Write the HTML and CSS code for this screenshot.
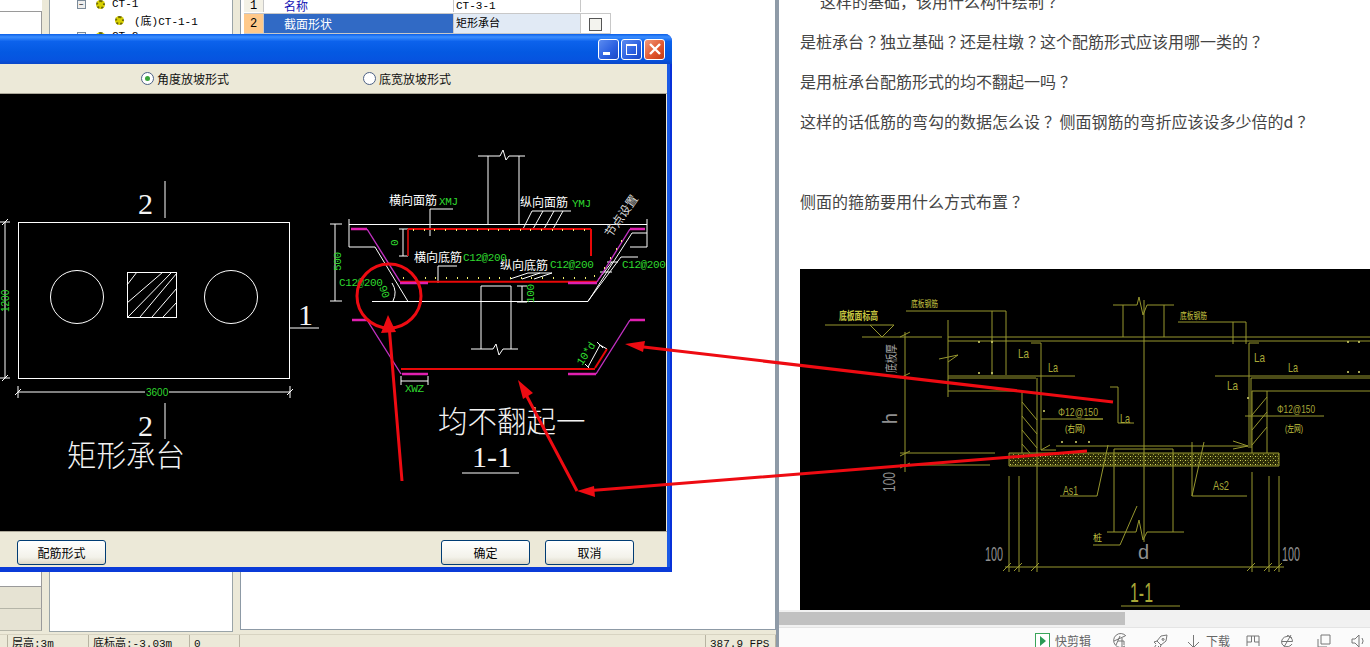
FILE: index.html
```html
<!DOCTYPE html>
<html lang="zh">
<head>
<meta charset="utf-8">
<title>矩形承台</title>
<link rel="stylesheet" href="styles.css">
</head>
<body>
<div class="app">
  <div class="app-main">
    <div class="side-col">
      <div class="side-top"></div>
      <div class="side-box"></div>
      <div class="side-row"></div>
      <div class="side-row"></div>
    </div>
    <div class="tree">
      <div class="tree-row lvl1"><span class="expander">−</span><span class="gear"></span><span>CT-1</span></div>
      <div class="tree-row lvl2"><span class="gear"></span><span>(底)CT-1-1</span></div>
      <div class="tree-row lvl1"><span class="expander">−</span><span class="gear"></span><span>CT-2</span></div>
    </div>
    <div class="props">
      <div class="prop-table">
        <div class="prop-row short">
          <div class="p-num">1</div><div class="p-name">名称</div><div class="p-val">CT-3-1</div><div class="p-chk"></div>
        </div>
        <div class="prop-row tall selected">
          <div class="p-num">2</div><div class="p-name">截面形状</div><div class="p-val">矩形承台</div><div class="p-chk"><span class="check"></span></div>
        </div>
      </div>
    </div>
  </div>
  <div class="status">
    <div class="st st0"></div>
    <div class="st st1">层高:3m</div>
    <div class="st st2">底标高:-3.03m</div>
    <div class="st st3">0</div>
    <div class="st st4"></div>
    <div class="st st5">387.9 FPS</div>
  </div>

  <div class="dialog">
    <div class="titlebar">
      <span class="tb-btn"><i class="g-min"></i></span>
      <span class="tb-btn"><i class="g-max"></i></span>
      <span class="tb-btn close"><svg width="14" height="14" viewBox="0 0 14 14"><path class="g-x" d="M2 2L12 12M12 2L2 12"/></svg></span>
    </div>
    <div class="radio-bar">
      <label class="radio"><span class="dot on"></span>角度放坡形式</label>
      <label class="radio"><span class="dot"></span>底宽放坡形式</label>
    </div>
    <svg class="canvas" width="666" height="437" viewBox="0 94 666 437">
      <g class="w">
        <rect x="18.5" y="222.5" width="271" height="156"/>
        <circle cx="77" cy="297" r="26.5"/>
        <circle cx="231" cy="297" r="26.5"/>
        <rect x="127.5" y="272.5" width="49" height="45"/>
        <path d="M127 285L137 272M127 303L163 272M128 317L172 272M140 317L177 273M152 317L177 288M163 317L177 302"/>
        <path d="M165 181V218M165 403V439M290 328H319"/>
        <path d="M5 222V378M0 222H10M0 378H10M2 225L8 219M2 381L8 375"/>
        <path d="M18 392H145M169 392H290M18 386V398M290 386V398M15 395L21 389M287 395L293 389"/>
        <path d="M488 156V224M519 156V224M478 156H500L503 150L506 160L509 156H525"/>
        <path d="M349 224.5H647M349 219V247M647 219V247M349 247H375M372 301.5H588M375 247L408 301.5M632 233L588 301.5M632 233H647M630 247H647"/>
        <path d="M335 224V301M330 224H342M330 301H342"/>
        <path d="M403 229V256M399 229H408M399 256H408"/>
        <path d="M430 209V236M430 209H453M532 211H571M532 211L523 229M543 211L533 229M554 211L544 229M563 211L553 229"/>
        <path d="M438 266V283M438 266H457M528 273H552M528 273L510 279M540 273L522 279M552 273L534 279"/>
        <path d="M621 257H638M621 257L588 301M607 262H618M600 272H612M612 262L598 280"/>
        <path d="M393 301A18 18 0 0 0 392 283"/>
        <path d="M522 286V302M517 286H527M517 302H527"/>
        <path d="M481 286V349M511 286V349M481 286H511M471 349H493L496 344L499 355L503 349H518"/>
        <path d="M588 367L600 345M600 345L607 349M585 364L591 370M597 342L603 348"/>
        <path d="M401 381H428M401 376V385M428 376V385"/>
        <path d="M462 473H519"/>
      </g>
      <g class="rebar-dark"><path d="M408 229V256M591 229V256"/></g>
      <g class="rebar"><path d="M408 229H591M591 229V256M400 281.7H597M401 369H595M595 368L607 349"/></g>
      <g class="mag-thick"><path d="M351 229H367M400 283H428M568 283H597M630 229H645M352 320H367M402 374H428M568 374H596M630 320H645"/></g>
      <g class="mag"><path d="M367 229L400 281.7M597 282L630 229M367 320L401 374M596 374L630 320"/></g>
      <g class="dots">
        <path d="M413 230h1M424 230h1M434 230h1M445 230h1M456 230h1M466 230h1M477 230h1M488 230h1M498 230h1M509 230h1M520 230h1M530 230h1M541 230h1M552 230h1M562 230h1M573 230h1M584 230h1"/>
        <path d="M403 278h1M414 278h1M425 278h1M435 278h1M446 278h1M457 278h1M467 278h1M478 278h1M489 278h1M499 278h1M510 278h1M521 278h1M531 278h1M542 278h1M553 278h1M563 278h1M574 278h1M585 278h1M594 276h1"/>
        <path d="M604 268h1M610 258h1M616 249h1M621 241h1"/>
      </g>
      <g class="cad-cn">
        <text x="389" y="205">横向面筋</text>
        <text x="520" y="207">纵向面筋</text>
        <text x="414" y="262">横向底筋</text>
        <text x="500" y="270">纵向底筋</text>
      </g>
      <text class="cad-cn dim-cn" transform="translate(611 238) rotate(-55)">节点设置</text>
      <g class="green">
        <text x="439" y="205">XMJ</text>
        <text x="572" y="207">YMJ</text>
        <text x="463" y="261">C12@200</text>
        <text x="550" y="268">C12@200</text>
        <text x="339" y="286">C12@200</text>
        <text x="622" y="268">C12@200</text>
        <text x="405" y="392">XWZ</text>
        <text x="146" y="396" class="num">3600</text>
        <text transform="translate(9 312) rotate(-90)" class="num">1200</text>
        <text transform="translate(341 271) rotate(-90)">500</text>
        <text transform="translate(398 246) rotate(-90)">0</text>
        <text transform="translate(379 287) rotate(70)">90</text>
        <text transform="translate(534 303) rotate(-90)">100</text>
        <text transform="translate(582 366) rotate(-57)">10*d</text>
      </g>
      <g class="sec">
        <text x="138" y="214">2</text>
        <text x="138" y="436">2</text>
        <text x="298" y="325">1</text>
        <text x="472" y="467">1-1</text>
      </g>
      <g class="big-cn">
        <text x="67" y="466">矩形承台</text>
        <text x="438" y="432">均不翻起一</text>
      </g>
    </svg>
    <div class="btn-bar">
      <button class="btn">配筋形式</button>
      <span class="btn-spacer"></span>
      <button class="btn">确定</button>
      <button class="btn">取消</button>
    </div>
  </div>
</div>

<div class="splitter"></div>

<div class="pane">
  <div class="viewport">
    <div class="article">
      <p class="indent">这样的基础，该用什么构件绘制<span class="q">？</span></p>
      <p>是桩承台<span class="q">？</span>独立基础<span class="q">？</span>还是柱墩<span class="q">？</span>这个配筋形式应该用哪一类的<span class="q">？</span></p>
      <p>是用桩承台配筋形式的均不翻起一吗<span class="q">？</span></p>
      <p>这样的话低筋的弯勾的数据怎么设<span class="q">？</span> 侧面钢筋的弯折应该设多少倍的d<span class="q">？</span></p>
      <p class="blank"></p>
      <p>侧面的箍筋要用什么方式布置<span class="q">？</span></p>
      <svg class="photo" width="570" height="341" viewBox="800 269 570 341">
        <defs>
          <pattern id="speck" width="5" height="4" patternUnits="userSpaceOnUse">
            <rect width="5" height="4" fill="#2c2c08"/>
            <rect x="0" y="0" width="1" height="1" fill="#d8d860"/>
            <rect x="3" y="2" width="1" height="1" fill="#a0a038"/>
            <rect x="2" y="0" width="1" height="1" fill="#77772a"/>
          </pattern>
        </defs>
        <rect x="1009" y="453" width="270" height="13" fill="url(#speck)"/>
        <g class="y">
          <path d="M948 337H1370M948 341H1370M862 337H942M825 325H894M870 325L882 337L894 325"/>
          <path d="M906 311H1006M1006 311V375M992 311V375M905 332V472M900 337L910 332M900 378L910 373M900 456L910 451M900 468L910 463"/>
          <path d="M948 320V397M939 359L958 355L948 362"/>
          <path d="M948 376H1075M948 378H1036M948 391H1022"/>
          <path d="M1022 391V453M1037 378V572M1022 402L1037 420M1022 416L1037 434M1022 430L1037 448M1022 444L1030 453"/>
          <path d="M1031 343H1041V450H1056M1041 450L1050 445M1041 419H1103"/>
          <path d="M900 453H995M900 465H990M1009 453H1279M1009 466H1279M1009 453V466M1279 453V466"/>
          <path d="M1009 476V572M1019 476V572M1252 472V572M1269 476V572M1279 476V572M1005 567H1284"/>
          <path d="M1003 571L1011 563M1014 571L1022 563M1031 571L1039 563M1247 571L1255 563M1264 571L1272 563M1274 571L1282 563"/>
          <path d="M1060 496H1097L1108 445"/>
          <path d="M1123 305V337M1164 305V337M1113 305H1137L1139 297L1143 315L1147 305H1174M1144 300V542"/>
          <path d="M1178 322H1246M1233 322V344M1246 322V344M1249 343H1259M1249 343V448M1215 376H1370M1251 378H1370M1251 378V448M1252 391H1370"/>
          <path d="M1252 391V453M1267 391V453M1252 415L1267 397M1252 430L1267 412M1252 445L1267 427"/>
          <path d="M1245 416H1324M1110 387H1118V423H1134M1085 419H1103M1056 446H1248M1233 441L1248 446L1233 449"/>
          <path d="M1192 442V496H1247M1192 496L1204 442"/>
          <path d="M1114 449V532M1173 449V532M1114 449H1173M1107 532H1136L1139 520L1143 540L1147 532H1184"/>
          <path d="M1093 545H1120L1137 506M1121 606H1180"/>
        </g>
        <path class="y-dot" d="M978 342h2M991 342h2M978 373h2M991 373h2M1347 342h2M1358 342h2M1347 372h2M1358 372h2M1043 411h2M1247 398h2M1061 442h2M1075 442h2M1088 442h2"/>
        <g class="y-txt">
          <text x="839" y="320" class="t13" textLength="39" lengthAdjust="spacingAndGlyphs">底板面标高</text>
          <text x="911" y="307" class="t9" textLength="27" lengthAdjust="spacingAndGlyphs">底板钢筋</text>
          <text x="1180" y="319" class="t9" textLength="27" lengthAdjust="spacingAndGlyphs">底板钢筋</text>
          <text x="1018" y="358" textLength="11" lengthAdjust="spacingAndGlyphs">La</text>
          <text x="1048" y="372" textLength="10" lengthAdjust="spacingAndGlyphs">La</text>
          <text x="1254" y="362" textLength="11" lengthAdjust="spacingAndGlyphs">La</text>
          <text x="1288" y="372" textLength="10" lengthAdjust="spacingAndGlyphs">La</text>
          <text x="1227" y="390" textLength="11" lengthAdjust="spacingAndGlyphs">La</text>
          <text x="1120" y="423" textLength="10" lengthAdjust="spacingAndGlyphs">La</text>
          <text x="1063" y="495" textLength="15" lengthAdjust="spacingAndGlyphs">As1</text>
          <text x="1213" y="490" textLength="16" lengthAdjust="spacingAndGlyphs">As2</text>
          <text x="1058" y="416" class="t12" textLength="40" lengthAdjust="spacingAndGlyphs">Φ12@150</text>
          <text x="1277" y="413" class="t12" textLength="38" lengthAdjust="spacingAndGlyphs">Φ12@150</text>
          <text x="1065" y="432" class="t9" textLength="20" lengthAdjust="spacingAndGlyphs">(右网)</text>
          <text x="1285" y="432" class="t9" textLength="18" lengthAdjust="spacingAndGlyphs">(左网)</text>
          <text x="1093" y="541" class="t9">桩</text>
          <text x="1130" y="602" class="t28" textLength="23" lengthAdjust="spacingAndGlyphs">1-1</text>
        </g>
        <g class="g-txt">
          <text x="985" y="561" class="t20" textLength="18" lengthAdjust="spacingAndGlyphs">100</text>
          <text x="1282" y="561" class="t20" textLength="18" lengthAdjust="spacingAndGlyphs">100</text>
          <text x="1138" y="559" class="t20">d</text>
          <text transform="translate(897 424) rotate(-90)" class="t20" textLength="11" lengthAdjust="spacingAndGlyphs">h</text>
          <text transform="translate(895 492) rotate(-90)" class="t18" textLength="20" lengthAdjust="spacingAndGlyphs">100</text>
          <text transform="translate(896 373) rotate(-90)" class="t13" textLength="29" lengthAdjust="spacingAndGlyphs">底板厚</text>
        </g>
      </svg>
    </div>
  </div>
  <div class="hscroll"><div class="hthumb"></div></div>
  <div class="toolbar">
    <span class="tool clip">
      <svg class="ic-clip" width="15" height="16" viewBox="0 0 15 16"><rect x="0.5" y="0.5" width="14" height="15" class="clip-box"/><path d="M5 3L11 8L5 13Z" class="clip-play"/></svg>
      快剪辑
    </span>
    <svg class="ic i1" width="16" height="16" viewBox="0 0 16 16"><path d="M14 3A7 7 0 1 0 13 13M2 8L13 3M8 3L4 12M6 8H12V12M10 5V14"/></svg>
    <svg class="ic i2" width="16" height="16" viewBox="0 0 16 16"><path d="M14 2L8 3L4 8L8 12L13 8ZM4 8L1 9L3 11M8 12L7 15L5 13M3 12L1 15M10 5.5A1 1 0 1 0 10.1 5.5"/></svg>
    <span class="tool dl">
      <svg class="ic" width="13" height="16" viewBox="0 0 13 16"><path d="M6.5 2V14M1 9L6.5 14.5L12 9"/></svg>
      下载
    </span>
    <svg class="ic i3" width="14" height="14" viewBox="0 0 14 14"><path d="M1 2H13V8H8.5V2M5.5 2V8H1V2M1 8V12M13 8V12"/></svg>
    <svg class="ic i4" width="16" height="16" viewBox="0 0 16 16"><path d="M13 5A6 6 0 0 0 3 11A6 6 0 0 0 13 11M2.5 8.5H13.5A6 6 0 0 0 8 2.5M5 14L12 2"/></svg>
    <svg class="ic i5" width="14" height="14" viewBox="0 0 14 14"><path d="M4 1H13V10H4ZM1 5V13H10"/></svg>
    <svg class="ic i6" width="15" height="16" viewBox="0 0 15 16"><path d="M1 6H4L8 2V14L4 10H1ZM11 5A5 5 0 0 1 11 11"/></svg>
  </div>
</div>

<svg class="overlay" width="1370" height="647" viewBox="0 0 1370 647">
  <circle class="mark" cx="389" cy="296" r="32"/>
  <path class="mark" d="M402 481L389 325M1113 402L635 346M1087 451L585 491M577 491L523 389"/>
  <path class="mark-fill" d="M388 315L396 332L381 333ZM625 344L645 341L643 352ZM577 491L594 486L595 497ZM518 380L533 393L523 399Z"/>
</svg>
</body>
</html>
```
FILE: styles.css
```css
* { box-sizing: border-box; }
html, body { margin: 0; padding: 0; }
body {
  width: 1370px;
  height: 647px;
  overflow: hidden;
  display: flex;
  position: relative;
  background: #fff;
  font-family: "Noto Sans CJK SC", "Liberation Sans", sans-serif;
}

/* Background application */
.app {
  width: 776px;
  height: 647px;
  background: #ece9d8;
  position: relative;
  flex: none;
  display: flex;
  flex-direction: column;
  font-size: 12px;
  color: #000;
}
.app-main {
  height: 634px;
  display: flex;
  align-items: flex-start;
}
.side-col { width: 42px; flex: none; height: 632px; display: flex; flex-direction: column; }
.side-top { height: 12px; background: #fff; border-bottom: 1px solid #9a9a9a; }
.side-box { height: 575px; background: #fff; border-right: 1px solid #9a9a9a; border-bottom: 1px solid #9a9a9a; }
.side-row { height: 22px; background: #e6e3d3; border-right: 1px solid #9a9a9a; border-bottom: 1px solid #b5b5a8; }
.tree {
  width: 184px;
  height: 632px;
  margin-left: 7px;
  background: #fff;
  border: 1px solid #9aa4a8;
  border-top: 0;
  overflow: hidden;
  font-family: "Liberation Mono", "Noto Sans CJK SC", monospace;
  font-size: 11px;
}
.tree-row { height: 16px; display: flex; align-items: center; gap: 7px; }
.tree-row:first-child { margin-top: -4px; }
.tree-row.lvl1 { padding-left: 27px; }
.tree-row.lvl2 { padding-left: 65px; gap: 10px; }
.expander {
  width: 9px; height: 9px;
  border: 1px solid #7a8a99;
  background: #eee;
  font-size: 8px; line-height: 7px; text-align: center;
  margin-right: 3px;
  flex: none;
}
.gear {
  width: 9px; height: 9px; flex: none;
  border-radius: 50%;
  background: #d8d000;
  border: 2px dotted #6e6a00;
}
.props {
  width: 536px;
  height: 630px;
  margin-left: 7px;
  background: #fff;
  border: 1px solid #8d9aa6;
  border-top: 0;
  padding-left: 3px;
}
.prop-table { width: 367px; }
.prop-row { display: flex; border-bottom: 1px solid #c8c8c8; }
.prop-row.short { height: 14px; line-height: 12px; align-items: flex-start; }
.prop-row.tall { height: 20px; line-height: 20px; }
.p-num { width: 20px; background: #f3f1e6; text-align: center; border-right: 1px solid #c8c8c8; font-family: "Liberation Mono", monospace; }
.p-name { width: 190px; padding-left: 20px; color: #1414b4; border-right: 1px solid #c8c8c8; }
.p-val { width: 127px; padding-left: 2px; border-right: 1px solid #c8c8c8; font-family: "Liberation Mono", "Noto Sans CJK SC", monospace; font-size: 11px; }
.p-chk { width: 30px; border-right: 1px solid #c8c8c8; display: flex; align-items: center; justify-content: center; }
.selected .p-num { background: #ffc98a; color: #000; }
.selected .p-name { background: #316ac5; color: #fff; }
.selected .p-val { background: #e1eaf5; }
.selected .p-chk { background: #fff; }
.check { width: 13px; height: 13px; border: 1px solid #555; background: #f3f3ee; margin-top: 2px; }

.status {
  height: 13px;
  display: flex;
  font-family: "Liberation Mono", "Noto Sans CJK SC", monospace;
  font-size: 11px;
  line-height: 13px;
  overflow: hidden;
  border-top: 1px solid #d8d4c2;
  color: #111;
}
.st { border-right: 1px solid #b8b4a2; padding-left: 4px; padding-top: 3px; flex: none; white-space: nowrap; }
.st0 { width: 8px; padding: 0; }
.st1 { width: 81px; }
.st2 { width: 101px; }
.st3 { width: 50px; }
.st4 { width: 466px; padding: 0; }
.st5 { width: 70px; }

/* Dialog window */
.dialog {
  position: absolute;
  left: 0;
  top: 34px;
  width: 672px;
  height: 538px;
  background: #ece9d8;
  border-right: 2px solid #0831d9;
  border-bottom: 5px solid #0a3bd8;
  border-radius: 0 7px 0 0;
  box-shadow: inset -3px 0 0 #1a5ae6;
  display: flex;
  flex-direction: column;
}
.titlebar {
  height: 30px;
  flex: none;
  border-radius: 0 7px 0 0;
  background: linear-gradient(#0a5fe8 0, #3b8eff 10%, #0c62ec 25%, #0459e2 60%, #0654e0 85%, #0a47c8 100%);
  display: flex;
  justify-content: flex-end;
  align-items: center;
  gap: 2px;
  padding-right: 7px;
  margin-right: -2px;
}
.tb-btn {
  width: 21px; height: 21px;
  border: 1px solid #fff;
  border-radius: 3px;
  background: linear-gradient(135deg, #5b8bf0, #2a5fe0 60%, #1c48c4);
  display: flex; align-items: center; justify-content: center;
  position: relative;
}
.tb-btn.close { background: linear-gradient(135deg, #f09a7c, #e0542c 60%, #c13a14); }
.g-min { width: 7px; height: 3px; background: #fff; margin-top: 8px; margin-right: 4px; }
.g-max { width: 11px; height: 11px; border: 1px solid #fff; border-top-width: 2px; }
.g-x { stroke: #fff; stroke-width: 2.4; fill: none; }
.radio-bar {
  height: 30px;
  flex: none;
  margin-right: 3px;
  display: flex;
  align-items: center;
  padding-left: 141px;
  gap: 134px;
  font-size: 12px;
  border-bottom: 1px solid #aca899;
  color: #111;
}
.radio { display: flex; align-items: center; gap: 3px; }
.dot {
  width: 13px; height: 13px;
  border-radius: 50%;
  border: 1px solid #4d6185;
  background: #fff;
  display: flex; align-items: center; justify-content: center;
}
.dot.on::after { content: ""; width: 5px; height: 5px; border-radius: 50%; background: #3ba53b; }
.canvas { display: block; background: #000; flex: none; }
.btn-bar {
  flex: 1;
  margin-right: 3px;
  border-top: 1px solid #aca899;
  display: flex;
  align-items: flex-start;
  padding: 8px 33px 0 17px;
  gap: 15px;
}
.btn-spacer { flex: 1; }
.btn {
  width: 89px; height: 25px;
  padding: 0;
  border: 1px solid #003c74;
  border-radius: 3px;
  background: linear-gradient(#fff, #f3f2ea 70%, #dcd8c8);
  font-family: "Noto Sans CJK SC", sans-serif;
  font-size: 12px;
  color: #000;
}

/* CAD canvas drawing */
.w path, .w rect, .w circle { fill: none; stroke: #fff; stroke-width: 1; }
.rebar path { fill: none; stroke: #e80808; stroke-width: 2; }
.rebar-dark path { fill: none; stroke: #b00808; stroke-width: 2; }
.mag path { fill: none; stroke: #c030c0; stroke-width: 1.4; }
.mag-thick path { fill: none; stroke: #e020b0; stroke-width: 2.4; }
.dots path { fill: none; stroke: #f4f070; stroke-width: 2; }
.cad-cn { font-family: "Noto Sans CJK SC", sans-serif; font-size: 12px; fill: #fff; }
.dim-cn { fill: #d8d8d8; }
.green { font-family: "Liberation Mono", monospace; font-size: 11px; fill: #2fd82f; letter-spacing: -0.4px; }
.green .num { font-family: "Liberation Sans", sans-serif; font-size: 10px; letter-spacing: 0; }
.sec { font-family: "Liberation Serif", serif; font-size: 30px; fill: #f4f4f4; }
.big-cn { font-family: "Noto Sans CJK SC", sans-serif; font-size: 29.5px; font-weight: 300; fill: #f2f2f2; }

/* Splitter */
.splitter { width: 3px; flex: none; background: #8f9ba8; }

/* Right pane */
.pane {
  flex: 1;
  min-width: 0;
  height: 647px;
  display: flex;
  flex-direction: column;
  background: #fff;
}
.viewport { height: 610px; flex: none; overflow: hidden; }
.article {
  margin-top: -19px;
  padding-left: 21px;
  font-size: 16px;
  line-height: 40px;
  color: #444;
  width: 591px;
}
.article p { margin: 0; height: 40px; white-space: nowrap; }
.article .indent { padding-left: 20px; }
.q { display: inline-block; width: 16px; padding-left: 4px; white-space: nowrap; }
.photo { display: block; margin-top: 48px; background: #000; }
.y path { fill: none; stroke: #97972f; stroke-width: 1; }
.y-dot { fill: none; stroke: #d8d870; stroke-width: 1.4; }
.y-txt { font-family: "Liberation Sans", "Noto Sans CJK SC", sans-serif; font-size: 13px; fill: #a8a838; }
.y-txt .t13 { font-size: 11px; font-weight: 700; fill: #c4c440; }
.y-txt .t9 { font-size: 9px; fill: #c4c440; }
.y-txt .t12 { font-size: 11px; }
.y-txt .t28 { font-size: 28px; }
.g-txt { font-family: "Liberation Sans", "Noto Sans CJK SC", sans-serif; fill: #8f8f8f; }
.g-txt .t20 { font-size: 20px; }
.g-txt .t18 { font-size: 16px; }
.g-txt .t13 { font-size: 12px; fill: #a8a8a8; }

.hscroll { height: 17px; flex: none; background: #f1f1f1; padding-top: 2px; }
.hthumb { width: 346px; height: 13px; background: #c1c1c1; }
.toolbar {
  flex: 1;
  border-top: 1px solid #e4e4e4;
  background: #fbfbfb;
  display: flex;
  align-items: center;
  padding-left: 256px;
  padding-top: 6px;
  font-size: 12px;
  color: #666;
  white-space: nowrap;
  overflow: hidden;
}
.tool { display: flex; align-items: center; flex: none; }
.clip { gap: 5px; width: 57px; }
.dl { gap: 6px; margin-left: 18px; }
.ic { flex: none; }
.ic path { fill: none; stroke: #777; stroke-width: 1; }
.ic-clip { flex: none; }
.clip-box { fill: #fff; stroke: #3aa55a; }
.clip-play { fill: #2a9a55; stroke: none; }
.i1 { margin-left: 20px; }
.i2 { margin-left: 25px; }
.i3 { margin-left: 16px; }
.i4 { margin-left: 19px; }
.i5 { margin-left: 22px; }
.i6 { margin-left: 20px; }

/* Red annotation layer */
.overlay { position: absolute; left: 0; top: 0; pointer-events: none; }
.mark { fill: none; stroke: #ee0b12; stroke-width: 3; }
.mark-fill { fill: #ee0b12; }
```
